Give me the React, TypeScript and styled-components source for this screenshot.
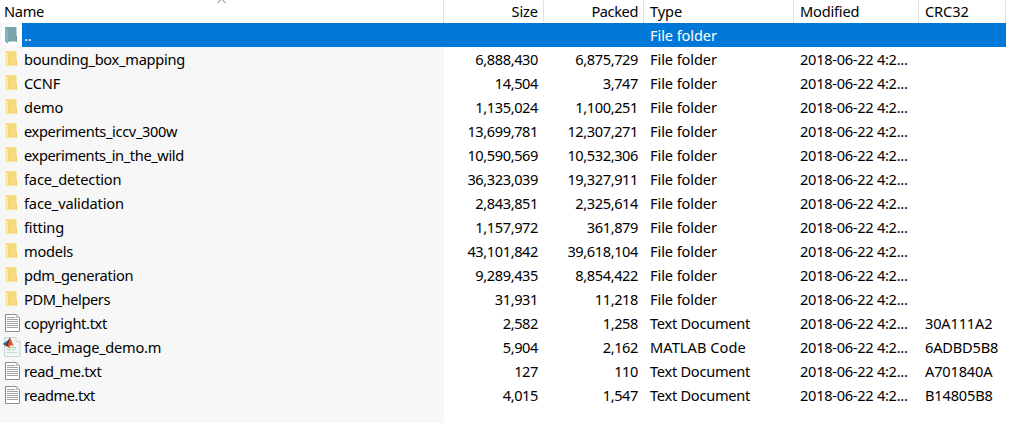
import React from 'react';
import styled, { createGlobalStyle } from 'styled-components';

const GlobalStyle = createGlobalStyle`
  html, body { margin: 0; background: #fff; overflow: hidden; }
`;

const COLUMNS = '444px 100px 100px 150px 125px 87px';

const FileList = styled.main`
  display: flex;
  flex-direction: column;
  width: 1014px;
  height: 423px;
  overflow: hidden;
  background: #fff;
  color: #000;
  font: 14.6px/24px 'Noto Sans', 'Open Sans', sans-serif;
`;

const Header = styled.div`
  display: grid;
  grid-template-columns: ${COLUMNS};
  height: 23px;
  flex: none;
  position: relative;
`;

const HeaderCell = styled.div<{ $right?: boolean }>`
  box-sizing: border-box;
  height: 23px;
  line-height: 22px;
  padding: ${p => (p.$right ? '0 5px 0 0' : '0 0 0 6px')};
  border-right: 1px solid #e2e2e2;
  text-align: ${p => (p.$right ? 'right' : 'left')};
  &:first-child { padding-left: 4px; }
`;

const SortArrow = styled.svg`
  position: absolute;
  left: 216px;
  top: 0;
`;

const Body = styled.div`
  flex: 1;
  background: linear-gradient(to right, #f7f7f7 444px, #fff 444px);
`;

const Row = styled.div<{ $selected?: boolean }>`
  display: grid;
  grid-template-columns: ${COLUMNS};
  width: 1006px;
  height: 24px;
  color: ${p => (p.$selected ? '#fff' : '#000')};
  background: ${p => (p.$selected ? 'linear-gradient(to right, transparent 22px, #0078d7 22px)' : 'none')};
`;

const NameCell = styled.div`
  display: flex;
`;

const IconSlot = styled.span<{ $selected?: boolean }>`
  display: block;
  flex: none;
  width: 20px;
  height: 20px;
  margin: 2px 2px 2px 2px;
  background: ${p => (p.$selected ? '#fff' : 'none')};
  svg { display: block; }
`;

const Label = styled.span<{ $s: number }>`
  white-space: pre;
  letter-spacing: ${p => p.$s}px;
`;

const Cell = styled.div<{ $right?: boolean }>`
  white-space: nowrap;
  padding: ${p => (p.$right ? '0 6px 0 0' : '0 0 0 6px')};
  text-align: ${p => (p.$right ? 'right' : 'left')};
`;

function FolderIcon({ selected }: { selected?: boolean }) {
  const back = selected ? '#7aa5a8' : '#f8d97f';
  const edge = selected ? '#6b989c' : '#ebc868';
  const front = selected ? '#82b3c2' : '#ffe8a2';
  return (
    <svg width="20" height="20" viewBox="0 0 20 20">
      <path d="M3 2H14.5V11H15V16.5H3Z" fill={back} />
      <path d="M14 11H15V16.5H13.5V15H14Z" fill={edge} />
      <path d="M3 2L6.5 4.5V17.5L5.5 18.5L3 16.5Z" fill={front} />
      <path d="M6.8 4.5V16.5" stroke={edge} strokeWidth=".6" />
    </svg>
  );
}

function TextIcon() {
  return (
    <svg width="20" height="20" viewBox="0 0 20 20">
      <path d="M3.5 1.5H14.5L17.5 4.5V18.5H3.5Z" fill="#fff" stroke="#8c8c8c" />
      <path d="M14.5 1.5V4.5H17.5" fill="#eee" stroke="#aaa" strokeWidth=".7" />
      <path d="M5 4.5H13M5 6.5H16M5 8.5H16M5 10.5H16M5 12.5H16M5 14.5H16" stroke="#a2a2a2" />
    </svg>
  );
}

function MatlabIcon() {
  return (
    <svg width="20" height="20" viewBox="0 0 20 20">
      <path d="M2.5 .5H14L18 4.5V19.5H2.5Z" fill="#f0f5f7" stroke="#c9d2d5" />
      <path d="M14 .5V4.5H18" fill="#fff" stroke="#c9d2d5" />
      <path d="M7 10.5H14M5 12.5H9" stroke="#a9d5a0" />
      <path d="M10 12.5H14M5 15.5H15" stroke="#c8d8d4" />
      <path d="M.5 7L3.5 5L6 3L8 .5L6.5 7L4 9Z" fill="#27719b" />
      <path d="M3.5 8L6 4.5L8 .5L7.5 7L5 10Z" fill="#7b2d22" />
      <path d="M8 .5C9.5 2.5 10 7 12 9L9 8L6.5 11L5 9C7 8 7 3 8 .5Z" fill="#dc5428" />
    </svg>
  );
}

type Kind = 'folder' | 'text' | 'matlab';
type Entry = { name: string; s: number; size: string; packed: string; kind: Kind; crc?: string };

const TYPES: Record<Kind, { label: string; s: number }> = {
  folder: { label: 'File folder', s: -0.1 },
  text: { label: 'Text Document', s: -0.27 },
  matlab: { label: 'MATLAB Code', s: 0.06 },
};

const ENTRIES: Entry[] = [
  { name: 'bounding_box_mapping', s: -0.27, size: '6,888,430', packed: '6,875,729', kind: 'folder' },
  { name: 'CCNF', s: -0.2, size: '14,504', packed: '3,747', kind: 'folder' },
  { name: 'demo', s: -0.1, size: '1,135,024', packed: '1,100,251', kind: 'folder' },
  { name: 'experiments_iccv_300w', s: -0.35, size: '13,699,781', packed: '12,307,271', kind: 'folder' },
  { name: 'experiments_in_the_wild', s: -0.38, size: '10,590,569', packed: '10,532,306', kind: 'folder' },
  { name: 'face_detection', s: -0.15, size: '36,323,039', packed: '19,327,911', kind: 'folder' },
  { name: 'face_validation', s: -0.15, size: '2,843,851', packed: '2,325,614', kind: 'folder' },
  { name: 'fitting', s: -0.15, size: '1,157,972', packed: '361,879', kind: 'folder' },
  { name: 'models', s: -0.25, size: '43,101,842', packed: '39,618,104', kind: 'folder' },
  { name: 'pdm_generation', s: -0.3, size: '9,289,435', packed: '8,854,422', kind: 'folder' },
  { name: 'PDM_helpers', s: -0.4, size: '31,931', packed: '11,218', kind: 'folder' },
  { name: 'copyright.txt', s: -0.33, size: '2,582', packed: '1,258', kind: 'text', crc: '30A111A2' },
  { name: 'face_image_demo.m', s: -0.26, size: '5,904', packed: '2,162', kind: 'matlab', crc: '6ADBD5B8' },
  { name: 'read_me.txt', s: -0.4, size: '127', packed: '110', kind: 'text', crc: 'A701840A' },
  { name: 'readme.txt', s: -0.42, size: '4,015', packed: '1,547', kind: 'text', crc: 'B14805B8' },
];

function EntryIcon({ kind }: { kind: Kind }) {
  if (kind === 'folder') return <FolderIcon />;
  return kind === 'text' ? <TextIcon /> : <MatlabIcon />;
}

export default function App() {
  return (
    <>
      <GlobalStyle />
      <FileList>
        <Header>
          <HeaderCell><Label $s={-0.3}>Name</Label></HeaderCell>
          <HeaderCell $right><Label $s={-0.1}>Size</Label></HeaderCell>
          <HeaderCell $right><Label $s={-0.4}>Packed</Label></HeaderCell>
          <HeaderCell><Label $s={-0.1}>Type</Label></HeaderCell>
          <HeaderCell><Label $s={-0.2}>Modified</Label></HeaderCell>
          <HeaderCell><Label $s={-0.1}>CRC32</Label></HeaderCell>
          <SortArrow width="11" height="4" viewBox="0 0 11 4">
            <path d="M1.5 3L4.5 0M9.5 3L6.5 0" stroke="#777" fill="none" />
          </SortArrow>
        </Header>
        <Body>
          <Row $selected>
            <NameCell>
              <IconSlot $selected><FolderIcon selected /></IconSlot>
              <Label $s={-0.3}>..</Label>
            </NameCell>
            <Cell /><Cell />
            <Cell><Label $s={TYPES.folder.s}>File folder</Label></Cell>
          </Row>
          {ENTRIES.map(e => (
            <Row key={e.name}>
              <NameCell>
                <IconSlot><EntryIcon kind={e.kind} /></IconSlot>
                <Label $s={e.s}>{e.name}</Label>
              </NameCell>
              <Cell $right><Label $s={-0.4}>{e.size}</Label></Cell>
              <Cell $right><Label $s={-0.4}>{e.packed}</Label></Cell>
              <Cell><Label $s={TYPES[e.kind].s}>{TYPES[e.kind].label}</Label></Cell>
              <Cell><Label $s={-0.28}>2018-06-22 4:2...</Label></Cell>
              <Cell>{e.crc && <Label $s={-0.18}>{e.crc}</Label>}</Cell>
            </Row>
          ))}
        </Body>
      </FileList>
    </>
  );
}
